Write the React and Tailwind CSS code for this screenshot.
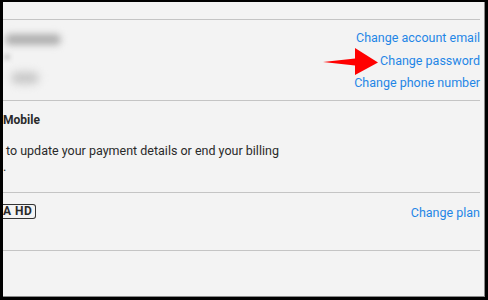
import React from "react";

const font = { fontFamily: "Roboto, 'Noto Sans', sans-serif" };

const Link = ({ children }) => (
  <a href="#" className="text-[#1f86e6] hover:underline">
    {children}
  </a>
);

const Arrow = () => (
  <svg
    className="absolute left-[320px] top-[46px]"
    width="56"
    height="28"
    viewBox="0 0 56 28"
  >
    <polygon points="0,14 32,10.5 32,0 55,14.5 32,27 32,17.5" fill="#ff0000" />
  </svg>
);

export default function App() {
  return (
    <div
      className="w-[488px] h-[300px] bg-black pt-[2px] pl-[3px] pr-[3px] pb-[3px]"
      style={font}
    >
      <div className="relative h-full bg-[#f3f3f3] border-r border-b border-[#8a8a8a] pr-[4px] text-[12.5px] text-[#2a2a2a] overflow-hidden">
        {/* top strip */}
        <div className="h-[18px] border-b border-[#c4c4c4]" />

        {/* account section (redacted details on the left) */}
        <div className="h-[81px] border-b border-[#c4c4c4] flex justify-between">
          <div className="pt-[14px] flex flex-col items-start">
            <div className="w-[56px] h-[11px] ml-[2px] bg-[#b0b0b0] rounded-md blur-[3.5px]" />
            <div className="w-[6px] h-[6px] mt-[9px] ml-[1px] bg-[#d0d0d0] blur-[2px]" />
            <div className="w-[28px] h-[12px] mt-[12px] ml-[8px] bg-[#c8c8c8] rounded-md blur-[4px]" />
          </div>
          <div className="pt-[7px] text-right leading-[22.5px] flex flex-col items-end">
            <Link>Change account email</Link>
            <Link>Change password</Link>
            <Link>Change phone number</Link>
          </div>
        </div>

        {/* payment section */}
        <div className="h-[92px] border-b border-[#c4c4c4] pt-[11px]">
          <div className="font-bold text-[12px] leading-[16px]">Mobile</div>
          <div className="mt-[15px] leading-[16px]">
            <div className="pl-[3px]">
              to update your payment details or end your billing
            </div>
            <div>.</div>
          </div>
        </div>

        {/* plan section */}
        <div className="h-[58px] border-b border-[#c4c4c4] flex justify-between items-start pt-[11px]">
          <span className="border border-l-0 border-[#333] rounded-r-[3px] pr-[3px] text-[12px] font-bold leading-[13px] tracking-[0.5px]">
            A HD
          </span>
          <Link>Change plan</Link>
        </div>

        <Arrow />
      </div>
    </div>
  );
}
